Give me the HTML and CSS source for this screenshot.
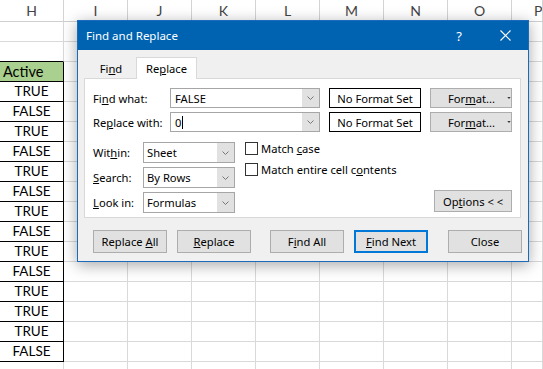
FILE: index.html
```html
<!DOCTYPE html>
<html>
<head>
<meta charset="utf-8">
<link rel="stylesheet" href="styles.css">
</head>
<body>
<div class="sheet">
  <div class="c ch">H</div><div class="c ch">I</div><div class="c ch">J</div><div class="c ch">K</div><div class="c ch">L</div><div class="c ch">M</div><div class="c ch">N</div><div class="c ch">O</div><div class="c ch last">P</div>

  <div class="c"></div><div class="c"></div><div class="c"></div><div class="c"></div><div class="c"></div><div class="c"></div><div class="c"></div><div class="c"></div><div class="c"></div>
  <div class="c above"></div><div class="c"></div><div class="c"></div><div class="c"></div><div class="c"></div><div class="c"></div><div class="c"></div><div class="c"></div><div class="c"></div>
  <div class="c v act">Active</div><div class="c"></div><div class="c"></div><div class="c"></div><div class="c"></div><div class="c"></div><div class="c"></div><div class="c"></div><div class="c"></div>
  <div class="c v">TRUE</div><div class="c"></div><div class="c"></div><div class="c"></div><div class="c"></div><div class="c"></div><div class="c"></div><div class="c"></div><div class="c"></div>
  <div class="c v">FALSE</div><div class="c"></div><div class="c"></div><div class="c"></div><div class="c"></div><div class="c"></div><div class="c"></div><div class="c"></div><div class="c"></div>
  <div class="c v">TRUE</div><div class="c"></div><div class="c"></div><div class="c"></div><div class="c"></div><div class="c"></div><div class="c"></div><div class="c"></div><div class="c"></div>
  <div class="c v">FALSE</div><div class="c"></div><div class="c"></div><div class="c"></div><div class="c"></div><div class="c"></div><div class="c"></div><div class="c"></div><div class="c"></div>
  <div class="c v">TRUE</div><div class="c"></div><div class="c"></div><div class="c"></div><div class="c"></div><div class="c"></div><div class="c"></div><div class="c"></div><div class="c"></div>
  <div class="c v">FALSE</div><div class="c"></div><div class="c"></div><div class="c"></div><div class="c"></div><div class="c"></div><div class="c"></div><div class="c"></div><div class="c"></div>
  <div class="c v">TRUE</div><div class="c"></div><div class="c"></div><div class="c"></div><div class="c"></div><div class="c"></div><div class="c"></div><div class="c"></div><div class="c"></div>
  <div class="c v">FALSE</div><div class="c"></div><div class="c"></div><div class="c"></div><div class="c"></div><div class="c"></div><div class="c"></div><div class="c"></div><div class="c"></div>
  <div class="c v">TRUE</div><div class="c"></div><div class="c"></div><div class="c"></div><div class="c"></div><div class="c"></div><div class="c"></div><div class="c"></div><div class="c"></div>
  <div class="c v">FALSE</div><div class="c"></div><div class="c"></div><div class="c"></div><div class="c"></div><div class="c"></div><div class="c"></div><div class="c"></div><div class="c"></div>
  <div class="c v">TRUE</div><div class="c"></div><div class="c"></div><div class="c"></div><div class="c"></div><div class="c"></div><div class="c"></div><div class="c"></div><div class="c"></div>
  <div class="c v">TRUE</div><div class="c"></div><div class="c"></div><div class="c"></div><div class="c"></div><div class="c"></div><div class="c"></div><div class="c"></div><div class="c"></div>
  <div class="c v">TRUE</div><div class="c"></div><div class="c"></div><div class="c"></div><div class="c"></div><div class="c"></div><div class="c"></div><div class="c"></div><div class="c"></div>
  <div class="c v">FALSE</div><div class="c"></div><div class="c"></div><div class="c"></div><div class="c"></div><div class="c"></div><div class="c"></div><div class="c"></div><div class="c"></div>
  <div class="c"></div><div class="c"></div><div class="c"></div><div class="c"></div><div class="c"></div><div class="c"></div><div class="c"></div><div class="c"></div><div class="c"></div>
</div>

<div class="dialog">
  <div class="titlebar">
    <span class="title">Find and Replace</span>
    <span class="tbtn help">?</span>
    <span class="tbtn close"><svg width="11" height="11" viewBox="0 0 11 11"><path d="M0.5 0.5L10.5 10.5M10.5 0.5L0.5 10.5" stroke="#fff" stroke-width="1.1" fill="none"/></svg></span>
  </div>
  <div class="body">
    <div class="tabs">
      <div class="tab"><span>Fi<u>n</u>d</span></div>
      <div class="tab selected"><span>Re<u>p</u>lace</span></div>
    </div>
    <div class="panel">
      <div class="frow">
        <span class="lbl wl">Fi<u>n</u>d what:</span>
        <div class="combo wide"><span class="val">FALSE</span><span class="arr"><svg width="7" height="4" viewBox="0 0 7 4"><path d="M0.5 0.5L3.5 3.5L6.5 0.5" stroke="#777" fill="none"/></svg></span></div>
        <div class="fmtset">No Format Set</div>
        <div class="btn fmt"><span>For<u>m</u>at...</span><svg class="tri" width="7" height="4" viewBox="0 0 7 4"><path d="M0.5 0.5H6.5L3.5 3.5Z" fill="#000"/></svg></div>
      </div>
      <div class="frow">
        <span class="lbl wl">Re<u>p</u>lace with:</span>
        <div class="combo wide"><span class="val"><span>0</span><span class="caret"></span></span><span class="arr"><svg width="7" height="4" viewBox="0 0 7 4"><path d="M0.5 0.5L3.5 3.5L6.5 0.5" stroke="#777" fill="none"/></svg></span></div>
        <div class="fmtset">No Format Set</div>
        <div class="btn fmt"><span>For<u>m</u>at...</span><svg class="tri" width="7" height="4" viewBox="0 0 7 4"><path d="M0.5 0.5H6.5L3.5 3.5Z" fill="#000"/></svg></div>
      </div>
      <div class="opts">
        <div class="selcol">
          <div class="srow"><span class="lbl sl">Wit<u>h</u>in:</span><div class="combo small"><span class="val">Sheet</span><span class="arr"><svg width="7" height="4" viewBox="0 0 7 4"><path d="M0.5 0.5L3.5 3.5L6.5 0.5" stroke="#777" fill="none"/></svg></span></div></div>
          <div class="srow"><span class="lbl sl"><u>S</u>earch:</span><div class="combo small"><span class="val">By Rows</span><span class="arr"><svg width="7" height="4" viewBox="0 0 7 4"><path d="M0.5 0.5L3.5 3.5L6.5 0.5" stroke="#777" fill="none"/></svg></span></div></div>
          <div class="srow"><span class="lbl sl"><u>L</u>ook in:</span><div class="combo small"><span class="val">Formulas</span><span class="arr"><svg width="7" height="4" viewBox="0 0 7 4"><path d="M0.5 0.5L3.5 3.5L6.5 0.5" stroke="#777" fill="none"/></svg></span></div></div>
        </div>
        <div class="checks">
          <div class="chk"><span class="box"></span><span>Match <u>c</u>ase</span></div>
          <div class="chk"><span class="box"></span><span>Match entire cell c<u>o</u>ntents</span></div>
        </div>
        <div class="btn options"><span>Op<u>t</u>ions &lt; &lt;</span></div>
      </div>
    </div>
    <div class="actions">
      <div class="btn act-btn"><span>Replace <u>A</u>ll</span></div>
      <div class="btn act-btn g10"><span><u>R</u>eplace</span></div>
      <div class="btn act-btn g19"><span>F<u>i</u>nd All</span></div>
      <div class="btn act-btn g10 default"><span><u>F</u>ind Next</span></div>
      <div class="btn act-btn g20"><span>Close</span></div>
    </div>
  </div>
</div>
</body>
</html>
```

FILE: styles.css
```css
html, body {
  margin: 0;
  padding: 0;
  background: #fff;
  overflow: hidden;
  width: 543px;
  height: 369px;
}

.sheet {
  display: grid;
  grid-template-columns: repeat(8, 64px) 31px;
  grid-template-rows: 22px;
  grid-auto-rows: 20px;
  font-family: Lato, "Liberation Sans", sans-serif;
  color: #000;
  overflow: hidden;
}

.c {
  box-sizing: border-box;
  border-right: 1px solid #d9d9d9;
  border-bottom: 1px solid #d9d9d9;
  overflow: hidden;
}

.ch {
  border-right-color: #d4d4d4;
  border-bottom-color: #cfcfcf;
  color: #444;
  font-size: 14px;
  text-align: center;
  line-height: 22px;
}

.ch.last {
  text-align: left;
  padding-left: 22px;
}

.above {
  border-bottom-color: #000;
}

.v {
  border-right-color: #000;
  border-bottom-color: #000;
  text-align: center;
  font-size: 13.5px;
  line-height: 19px;
}

.act {
  background: #a9d08e;
  text-align: left;
  padding-left: 3px;
  font-size: 14.5px;
}

/* Dialog */
.dialog {
  position: absolute;
  left: 77px;
  top: 20px;
  width: 452px;
  height: 242px;
  box-sizing: border-box;
  border: 1px solid #1a6cba;
  background: #f0f0f0;
  box-shadow: 0 3px 14px rgba(0, 0, 0, 0.35);
  font-family: "Noto Sans", "Open Sans", sans-serif;
  font-size: 11.2px;
  color: #000;
  display: flex;
  flex-direction: column;
}

.titlebar {
  height: 29px;
  background: #0063b1;
  color: #fff;
  display: flex;
  align-items: center;
  flex: none;
}

.title {
  font-size: 11.5px;
  padding-left: 8px;
}

.tbtn {
  width: 46px;
  height: 29px;
  display: flex;
  align-items: center;
  justify-content: center;
}

.help {
  margin-left: auto;
  font-size: 13px;
}

.body {
  padding: 0 7px 0 6px;
  display: flex;
  flex-direction: column;
}

.tabs {
  margin-top: 7px;
  height: 21px;
  padding-left: 2px;
  display: flex;
  align-items: flex-end;
}

.tab {
  box-sizing: border-box;
  width: 50px;
  height: 19px;
  display: flex;
  align-items: center;
  justify-content: center;
}

.tab.selected {
  width: 61px;
  height: 22px;
  margin-bottom: -1px;
  background: #fff;
  border: 1px solid #d9d9d9;
  border-bottom: none;
  position: relative;
  z-index: 1;
}

.panel {
  box-sizing: border-box;
  width: 437px;
  border: 1px solid #d9d9d9;
  background: #fff;
  padding: 9px 8px 4px 8px;
  display: flex;
  flex-direction: column;
  gap: 4px;
}

.frow {
  display: flex;
  align-items: center;
  height: 20px;
}

.lbl.wl { width: 77px; flex: none; }
.lbl.sl { width: 50px; flex: none; }

.combo {
  box-sizing: border-box;
  display: flex;
  border: 1px solid #a6a6a6;
  background: #fff;
  flex: none;
}

.combo.wide { width: 150px; height: 20px; }
.combo.small { width: 92px; height: 21px; }

.combo .val {
  flex: 1;
  display: flex;
  align-items: center;
  padding-left: 4px;
}

.combo.small .val { padding-left: 3px; }

.combo .arr {
  width: 17px;
  background: #e1e1e1;
  display: flex;
  align-items: center;
  justify-content: center;
}

.caret {
  display: inline-block;
  width: 1px;
  height: 13px;
  background: #000;
  margin-left: 1px;
}

.fmtset {
  box-sizing: border-box;
  margin-left: 9px;
  width: 92px;
  height: 20px;
  border: 1px solid #000;
  background: #fff;
  display: flex;
  align-items: center;
  justify-content: center;
  flex: none;
}

.btn {
  box-sizing: border-box;
  background: #e1e1e1;
  border: 1px solid #adadad;
  display: flex;
  align-items: center;
  justify-content: center;
  flex: none;
  white-space: pre;
}

.fmt {
  margin-left: 9px;
  width: 82px;
  height: 20px;
  justify-content: flex-start;
  padding-left: 17px;
}

.fmt .tri {
  margin-left: 12px;
}

.opts {
  margin-top: 6px;
  display: flex;
}

.selcol {
  display: flex;
  flex-direction: column;
  gap: 4px;
}

.srow {
  display: flex;
  align-items: center;
}

.checks {
  margin-left: 10px;
  display: flex;
  flex-direction: column;
  gap: 8px;
}

.chk {
  display: flex;
  align-items: center;
  height: 13px;
}

.chk .box {
  box-sizing: border-box;
  width: 13px;
  height: 13px;
  border: 1px solid #333;
  background: #fff;
  margin-right: 3px;
}

.options {
  margin-left: auto;
  align-self: flex-end;
  width: 78px;
  height: 22px;
  margin-bottom: 1px;
}

.actions {
  margin-top: 12px;
  padding-left: 9px;
  display: flex;
}

.act-btn {
  width: 74px;
  height: 23px;
}

.g10 { margin-left: 10px; }
.g19 { margin-left: 19px; }
.g20 { margin-left: 20px; }

.default {
  border: 2px solid #0078d7;
}
```
